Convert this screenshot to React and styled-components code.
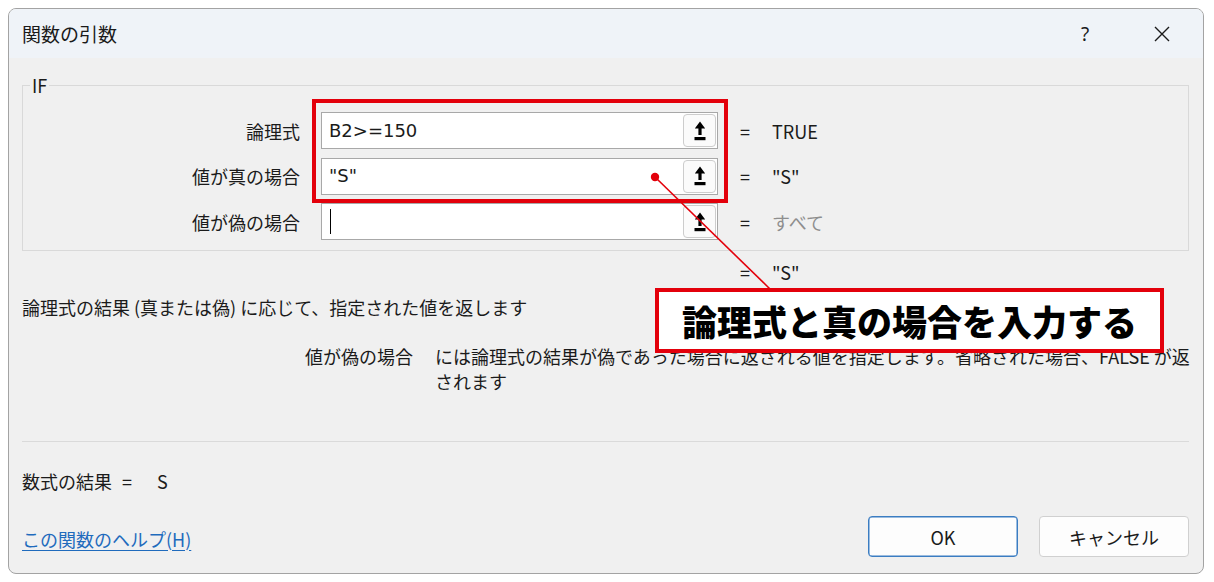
import React from "react";
import styled, { createGlobalStyle } from "styled-components";

const GlobalStyle = createGlobalStyle`
  html, body { margin: 0; padding: 0; background: #ffffff; }
  body {
    font-family: "Noto Sans CJK JP", "Noto Sans", sans-serif;
    color: #1b1b1b;
  }
  * { box-sizing: border-box; }
`;

const Page = styled.div`
  width: 1214px;
  height: 582px;
  padding: 8px 10px 0 8px;
`;

const Dialog = styled.div`
  position: relative;
  width: 1196px;
  height: 566px;
  border: 1px solid #a3a3a3;
  border-radius: 8px;
  overflow: hidden;
  background: #f0f0f0;
  display: flex;
  flex-direction: column;
`;

const TitleBar = styled.div`
  height: 49px;
  flex: none;
  background: #eff3f8;
  display: flex;
  align-items: center;
  padding: 0 0 0 13px;
`;

const Title = styled.div`
  flex: 1;
  font-size: 19px;
  line-height: 24px;
  color: #1a1a1a;
`;

const TitleButton = styled.div`
  width: ${(p) => p.$w}px;
  height: 49px;
  display: flex;
  align-items: center;
  justify-content: center;
  font-size: 19px;
  color: #1a1a1a;
  font-family: "Noto Sans", sans-serif;
`;

const Body = styled.div`
  flex: 1;
  display: flex;
  flex-direction: column;
  padding: 0 14px 16px 13px;
`;

const GroupBox = styled.fieldset`
  margin: 17px 0 0 0;
  padding: 17px 0 10px 0;
  border: 1px solid #d9d9d9;
  min-width: 0;
`;

const Legend = styled.legend`
  margin-left: 7px;
  padding: 0 2px;
  font-size: 18px;
  line-height: 20px;
  color: #1b1b1b;
`;

const ArgGrid = styled.div`
  display: grid;
  grid-template-columns: 277px 397px 1fr;
  column-gap: 21px;
  row-gap: 8.5px;
  align-items: center;
`;

const Label = styled.div`
  text-align: right;
  font-size: 18px;
  line-height: 24px;
`;

const InputBox = styled.div`
  height: 37px;
  background: #ffffff;
  border: 1px solid #a8a8a8;
  display: flex;
  align-items: center;
  padding: 0 1px 0 7px;
`;

const InputText = styled.div`
  flex: 1;
  font-family: "DejaVu Sans", sans-serif;
  font-size: 18px;
  line-height: 24px;
  color: #1b1b1b;
  white-space: nowrap;
`;

const Caret = styled.span`
  display: inline-block;
  width: 1px;
  height: 25px;
  background: #000;
  vertical-align: middle;
  margin-left: 1px;
`;

const RefButton = styled.div`
  width: 33px;
  height: 33px;
  border: 1px solid #cdcdcd;
  border-radius: 4px;
  background: #fbfbfb;
  display: flex;
  align-items: center;
  justify-content: center;
`;

const Result = styled.div`
  display: flex;
  align-items: center;
  font-size: 18px;
  line-height: 24px;
  gap: 22px;
  padding-left: 1px;
`;

const Value = styled.span`
  color: ${(p) => (p.$muted ? "#8e8e8e" : "#1b1b1b")};
`;

const FunctionResultRow = styled(Result)`
  margin-top: 9px;
  padding-left: 718px;
`;

const Description = styled.div`
  margin-top: 11px;
  font-size: 18px;
  line-height: 24px;
`;

const ArgHelp = styled.div`
  margin-top: 25px;
  display: grid;
  grid-template-columns: 391px 765px;
  column-gap: 22px;
  font-size: 18px;
  line-height: 25px;
`;

const ArgHelpLabel = styled.div`
  text-align: right;
`;

const Divider = styled.div`
  margin-top: 47px;
  height: 1px;
  background: #dadada;
`;

const FormulaResult = styled.div`
  margin-top: 27px;
  font-size: 18px;
  line-height: 24px;
  display: flex;
  gap: ${(p) => p.$gap}px;
`;

const ResultPart = styled.span`
  margin-left: ${(p) => p.$offset || 0}px;
`;

const Footer = styled.div`
  margin-top: auto;
  display: flex;
  align-items: center;
  gap: 21px;
`;

const HelpLink = styled.a`
  flex: 1;
  font-size: 18px;
  line-height: 24px;
  color: #1f6bbd;
  text-decoration: underline;
  text-underline-offset: 3px;
  padding-top: 5px;
`;

const Button = styled.div`
  width: 150px;
  height: 41px;
  border-radius: 4px;
  background: #fdfdfd;
  border: 1px solid ${(p) => (p.$primary ? "#3b7dc2" : "#d0d0d0")};
  box-shadow: ${(p) => (p.$primary ? "inset 0 0 0 0.5px #3b7dc2" : "none")};
  display: flex;
  align-items: center;
  justify-content: center;
  font-size: 18px;
  color: #1b1b1b;
`;

const RedFrame = styled.div`
  position: absolute;
  left: 303px;
  top: 90px;
  width: 416px;
  height: 104px;
  border: 4px solid #e3000b;
  pointer-events: none;
`;

const LeaderLayer = styled.svg`
  position: absolute;
  left: 0;
  top: 0;
  pointer-events: none;
`;

const Callout = styled.div`
  position: absolute;
  left: 646px;
  top: 279px;
  width: 509px;
  height: 65px;
  background: #ffffff;
  border: 4px solid #e3000b;
  display: flex;
  align-items: center;
  justify-content: center;
  font-size: 35px;
  font-weight: 900;
  color: #000;
  line-height: 40px;
`;

const UpIcon = () => (
  <svg width="12" height="20" viewBox="0 0 12 20">
    <path d="M6 0.5 L11.2 7.5 H7.6 V14 H4.4 V7.5 H0.8 Z" fill="#000" />
    <rect x="0.5" y="16" width="11" height="3.2" fill="#000" />
  </svg>
);

const CloseIcon = () => (
  <svg width="16" height="16" viewBox="0 0 16 16">
    <path d="M1 1 L15 15 M15 1 L1 15" stroke="#1a1a1a" strokeWidth="1.4" fill="none" />
  </svg>
);

const args = [
  { label: "論理式", value: "B2>=150", result: "TRUE" },
  { label: "値が真の場合", value: "\"S\"", result: "\"S\"" },
  { label: "値が偽の場合", value: "", result: "すべて", muted: true, caret: true },
];

export default function App() {
  return (
    <>
      <GlobalStyle />
      <Page>
        <Dialog>
          <TitleBar>
            <Title>関数の引数</Title>
            <TitleButton $w={72}>?</TitleButton>
            <TitleButton $w={82}>
              <CloseIcon />
            </TitleButton>
          </TitleBar>
          <Body>
            <GroupBox>
              <Legend>IF</Legend>
              <ArgGrid>
                {args.map((a) => (
                  <React.Fragment key={a.label}>
                    <Label>{a.label}</Label>
                    <InputBox>
                      <InputText>
                        {a.value}
                        {a.caret && <Caret />}
                      </InputText>
                      <RefButton>
                        <UpIcon />
                      </RefButton>
                    </InputBox>
                    <Result>
                      <span>=</span>
                      <Value $muted={a.muted}>{a.result}</Value>
                    </Result>
                  </React.Fragment>
                ))}
              </ArgGrid>
            </GroupBox>
            <FunctionResultRow>
              <span>=</span>
              <Value>"S"</Value>
            </FunctionResultRow>
            <Description>
              論理式の結果 (真または偽) に応じて、指定された値を返します
            </Description>
            <ArgHelp>
              <ArgHelpLabel>値が偽の場合</ArgHelpLabel>
              <div>
                には論理式の結果が偽であった場合に返される値を指定します。省略された場合、FALSE が返されます
              </div>
            </ArgHelp>
            <Divider />
            <FormulaResult $gap={10}>
              <ResultPart>数式の結果</ResultPart>
              <ResultPart>=</ResultPart>
              <ResultPart $offset={15}>S</ResultPart>
            </FormulaResult>
            <Footer>
              <HelpLink>この関数のヘルプ(H)</HelpLink>
              <Button $primary>OK</Button>
              <Button>キャンセル</Button>
            </Footer>
          </Body>
          <RedFrame />
          <LeaderLayer width="1194" height="564">
            <line x1="646" y1="168" x2="762" y2="281" stroke="#e3000b" strokeWidth="1.6" />
            <circle cx="646" cy="168" r="4.2" fill="#e3000b" />
          </LeaderLayer>
          <Callout>論理式と真の場合を入力する</Callout>
        </Dialog>
      </Page>
    </>
  );
}
